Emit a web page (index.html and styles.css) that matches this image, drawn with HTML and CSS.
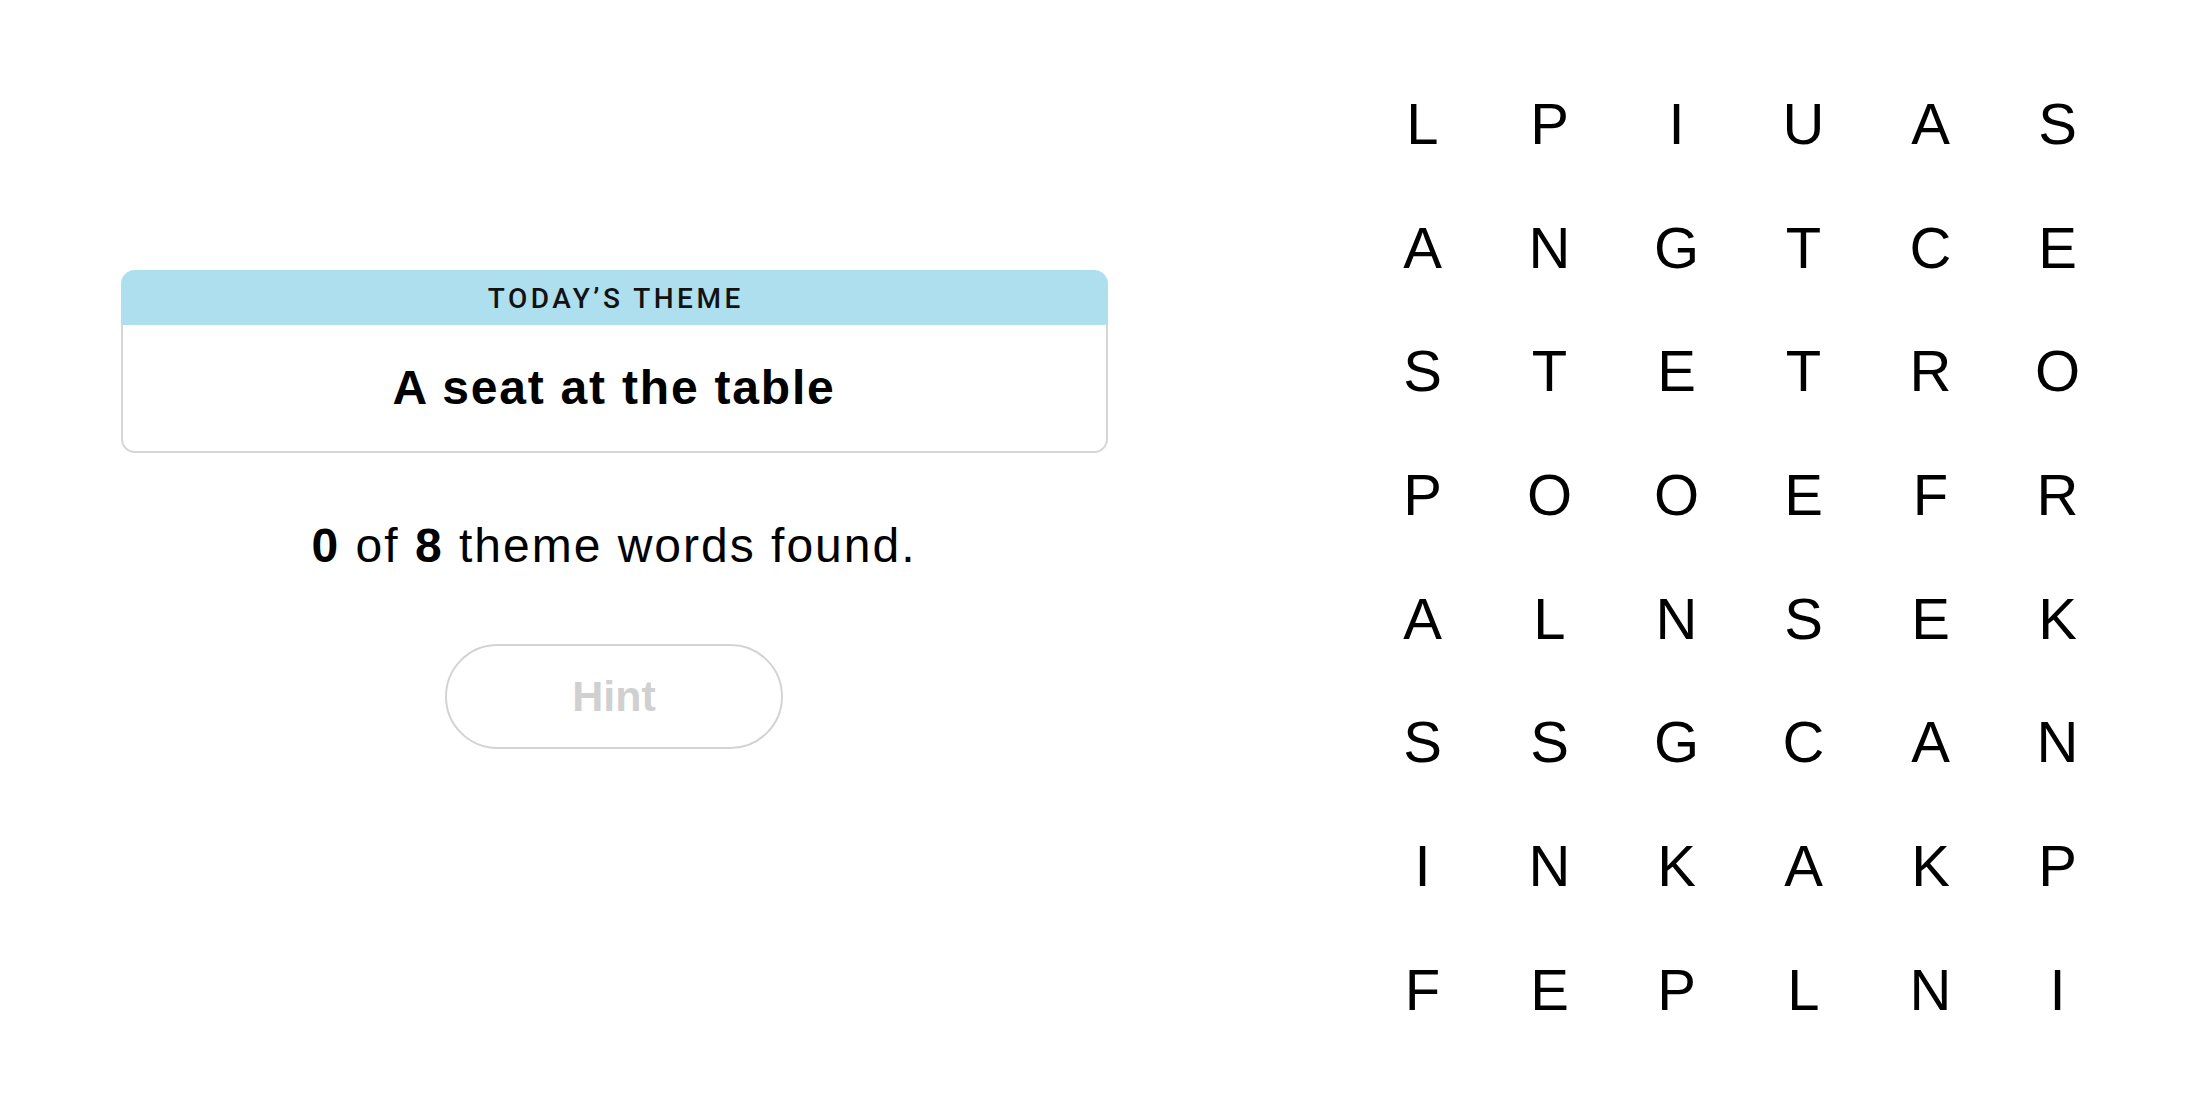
FILE: index.html
```html
<!DOCTYPE html>
<html lang="en">
<head>
<meta charset="utf-8">
<title>Strands</title>
<link rel="stylesheet" href="styles.css">
</head>
<body>
<main class="app">
  <section class="panel">
    <div class="theme-card">
      <div class="theme-head">TODAY’S THEME</div>
      <div class="theme-body">A seat at the table</div>
    </div>
    <p class="status"><b>0</b> of <b>8</b> theme words found.</p>
    <button class="hint" type="button">Hint</button>
  </section>
  <section class="board">
    <span>L</span><span>P</span><span>I</span><span>U</span><span>A</span><span>S</span>
    <span>A</span><span>N</span><span>G</span><span>T</span><span>C</span><span>E</span>
    <span>S</span><span>T</span><span>E</span><span>T</span><span>R</span><span>O</span>
    <span>P</span><span>O</span><span>O</span><span>E</span><span>F</span><span>R</span>
    <span>A</span><span>L</span><span>N</span><span>S</span><span>E</span><span>K</span>
    <span>S</span><span>S</span><span>G</span><span>C</span><span>A</span><span>N</span>
    <span>I</span><span>N</span><span>K</span><span>A</span><span>K</span><span>P</span>
    <span>F</span><span>E</span><span>P</span><span>L</span><span>N</span><span>I</span>
  </section>
</main>
</body>
</html>
```
FILE: styles.css
```css
* {
  box-sizing: border-box;
}

html, body {
  margin: 0;
  padding: 0;
  background: #ffffff;
}

body {
  font-family: "Liberation Sans", Arial, sans-serif;
  color: #000000;
  width: 2200px;
  height: 1100px;
  overflow: hidden;
}

.app {
  display: flex;
  align-items: flex-start;
}

.panel {
  width: 1228px;
  flex: none;
  display: flex;
  flex-direction: column;
  align-items: center;
  padding-top: 270px;
}

.theme-card {
  width: 987px;
  border-radius: 14px;
}

.theme-head {
  height: 55px;
  background: #aedfee;
  border-radius: 14px 14px 0 0;
  display: flex;
  align-items: center;
  justify-content: center;
  font-family: Roboto, "Liberation Sans", sans-serif;
  font-size: 28px;
  font-weight: 500;
  letter-spacing: 3.5px;
  color: #121212;
  padding-left: 3.5px;
  padding-top: 2px;
}

.theme-body {
  height: 128px;
  border: 2px solid #d6d6d6;
  border-top: none;
  border-radius: 0 0 14px 14px;
  display: flex;
  align-items: center;
  justify-content: center;
  font-size: 48px;
  font-weight: 700;
  letter-spacing: 1.8px;
  padding-bottom: 2px;
}

.status {
  margin: 65px 0 0;
  font-size: 48px;
  line-height: 56px;
  letter-spacing: 2px;
}

.status b {
  font-weight: 700;
}

.hint {
  margin-top: 70px;
  width: 338px;
  height: 105px;
  border: 2px solid #d3d3d3;
  border-radius: 53px;
  background: #ffffff;
  color: #d0d0d0;
  font-family: "Liberation Sans", Arial, sans-serif;
  font-size: 43px;
  font-weight: 700;
  padding: 0;
}

.board {
  margin-left: 131px;
  margin-top: 62px;
  display: grid;
  grid-template-columns: repeat(6, 127px);
  grid-auto-rows: 123.7px;
}

.board span {
  display: flex;
  align-items: center;
  justify-content: center;
  font-size: 58px;
  line-height: 1;
  color: #000000;
}
```
